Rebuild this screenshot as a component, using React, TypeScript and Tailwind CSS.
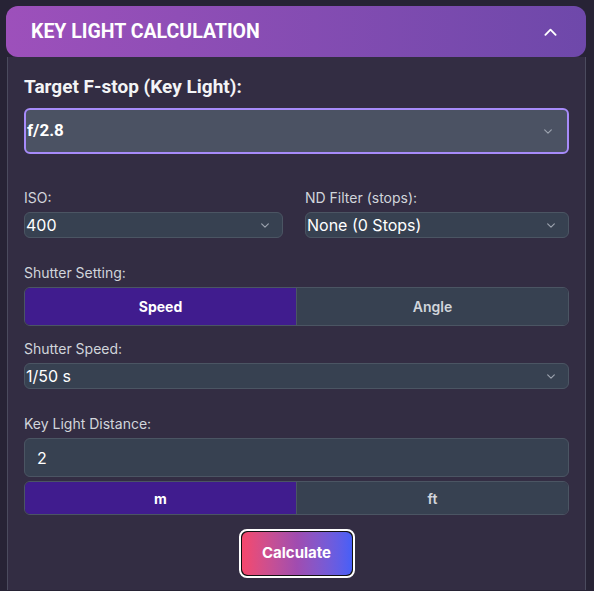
import React from "react";

const Chevron = ({ className = "" }: { className?: string }) => (
  <svg viewBox="0 0 12 8" className={className} fill="none" stroke="currentColor" strokeWidth="1.4" strokeLinecap="round" strokeLinejoin="round">
    <polyline points="2,2 6,6 10,2" />
  </svg>
);

const SmallSelect = ({ value }: { value: string }) => (
  <div className="flex items-center justify-between h-[26px] bg-[#374151] border border-[#4b5563] rounded-md pl-px pr-3">
    <span className="text-[16px] text-white leading-none">{value}</span>
    <Chevron className="w-[10px] h-[7px] text-[#9ca3af]" />
  </div>
);

const Label = ({ children, className = "" }: { children: React.ReactNode; className?: string }) => (
  <div className={`text-[14px] leading-5 text-[#d1d5db] mb-1 ${className}`}>{children}</div>
);

const Toggle = ({ left, right, h }: { left: string; right: string; h: string }) => (
  <div className={`flex ${h} border border-[#4b5563] rounded-md overflow-hidden`}>
    <div className="flex-1 flex items-center justify-center bg-[#401c8e] text-white font-bold text-[14px]">{left}</div>
    <div className="flex-1 flex items-center justify-center bg-[#374151] text-[#d1d5db] font-semibold text-[14px] border-l border-[#4b5563]">{right}</div>
  </div>
);

export default function App() {
  return (
    <div className="min-h-[591px] bg-[#272335] pt-[6px] pl-[6px] pr-[7px] font-['Inter',sans-serif]">
      <div className="flex items-center justify-between h-[51px] mr-px rounded-xl bg-gradient-to-r from-[#9d50bb] to-[#6e48aa] pl-[25px] pr-[29px]">
        <span className="font-['Roboto',sans-serif] font-bold text-[19.5px] text-white">KEY LIGHT CALCULATION</span>
        <svg viewBox="0 0 14 8" className="w-[13px] h-[8px] text-white" fill="none" stroke="currentColor" strokeWidth="2" strokeLinecap="round" strokeLinejoin="round">
          <polyline points="1.5,7 7,1.5 12.5,7" />
        </svg>
      </div>
      <div className="mx-px border-x border-[#4b4b5e] bg-[#332d43] px-4 pt-[18px] pb-3">
        <div className="font-['Roboto',sans-serif] font-bold text-[19px] leading-6 text-[#f3f4f6] mb-[9px]">
          Target F-stop (Key Light):
        </div>
        <div className="flex items-center justify-between h-[46px] bg-[#4b5263] border-2 border-[#a78bfa] rounded-md pl-px pr-[14px]">
          <span className="font-['Roboto',sans-serif] font-bold text-[17px] text-white">f/2.8</span>
          <Chevron className="w-[10px] h-[7px] text-[#9ca3af]" />
        </div>

        <div className="grid grid-cols-[259px_1fr] gap-[22px] mt-[34px]">
          <div>
            <Label>ISO:</Label>
            <SmallSelect value="400" />
          </div>
          <div>
            <Label>ND Filter (stops):</Label>
            <SmallSelect value="None (0 Stops)" />
          </div>
        </div>

        <Label className="mt-[25px]">Shutter Setting:</Label>
        <Toggle left="Speed" right="Angle" h="h-[39px]" />

        <Label className="mt-[13px]">Shutter Speed:</Label>
        <SmallSelect value="1/50 s" />

        <Label className="mt-[25px]">Key Light Distance:</Label>
        <div className="flex items-center h-[39px] bg-[#374151] border border-[#4b5563] rounded-md px-3 text-[16px] text-white">
          2
        </div>
        <div className="mt-1">
          <Toggle left="m" right="ft" h="h-[34px]" />
        </div>

        <div className="flex justify-center mt-[14px]">
          <button className="w-[116px] h-[49px] rounded-lg border-2 border-white bg-[#111] p-px">
            <span className="flex items-center justify-center w-full h-full rounded-md bg-gradient-to-r from-[#f5476c] via-[#a04cb0] to-[#465ff7] text-white font-bold text-[15px]">
              Calculate
            </span>
          </button>
        </div>
      </div>
    </div>
  );
}
